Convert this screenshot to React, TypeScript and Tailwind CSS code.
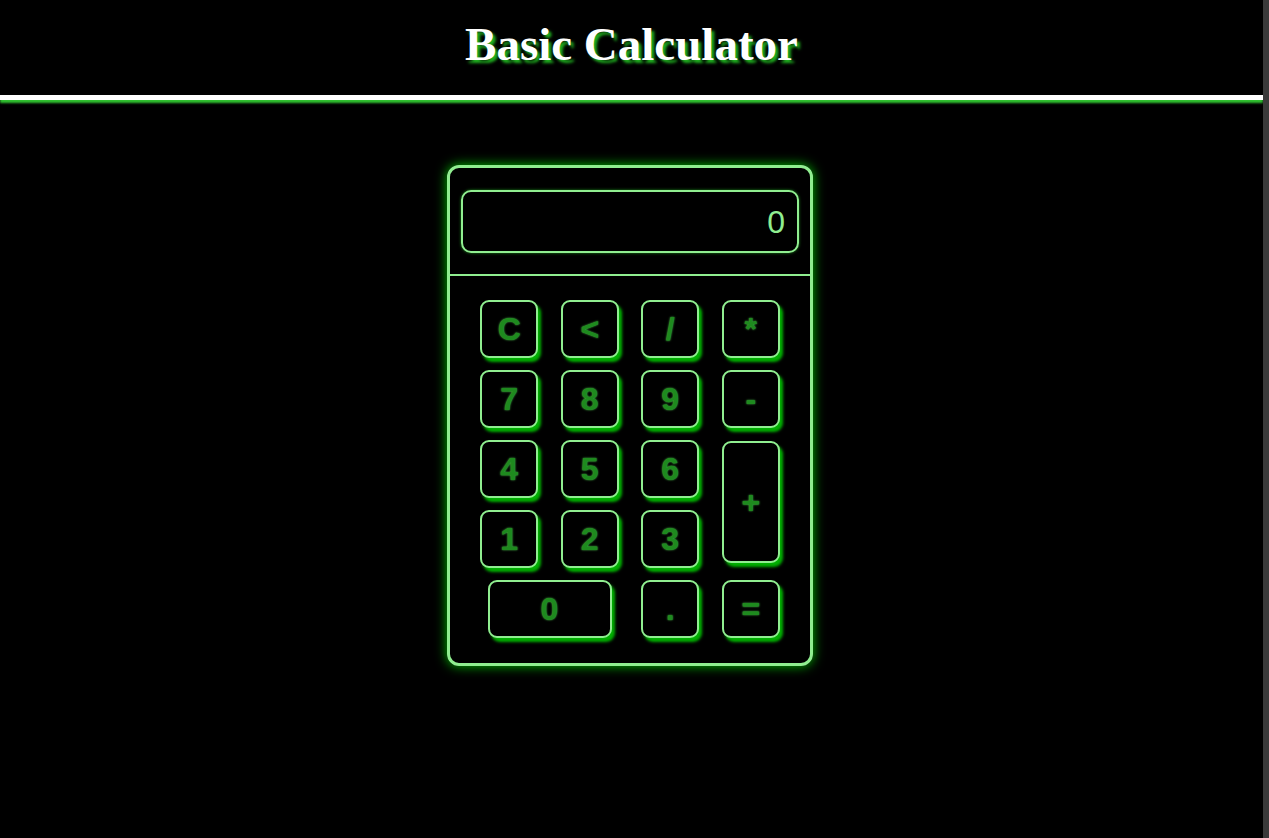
const keys: string[] = ["C", "<", "/", "*", "7", "8", "9", "-", "4", "5", "6", "+", "1", "2", "3", "0", ".", "="];

function cellClass(label: string) {
  if (label === "+") return "row-span-2";
  if (label === "0") return "col-span-2";
  if (label === ".") return "col-start-3";
  return "";
}

function sizeClass(label: string) {
  if (label === "+") return "mb-[4px] h-[122px] w-[58px]";
  if (label === "0") return "h-[58px] w-[124px]";
  return "h-[58px] w-[58px]";
}

export default function App() {
  return (
    <div className="flex min-h-[838px] bg-black">
      <div className="flex-1">
        {/* title bar */}
        <header className="h-[100px] border-b-[5px] border-white pt-[21px] text-center shadow-[0_3px_2px_#2fbf2f]">
          <h1 className="font-['Liberation_Serif',serif] text-[47px] leading-none font-bold text-white [text-shadow:3px_3px_3px_#1fb01f]">
            Basic Calculator
          </h1>
        </header>

        <div className="mt-[65px] flex justify-center pr-[3px]">
          <div className="w-[366px] rounded-[12px] border-[3px] border-[#90ee90] shadow-[0_0_12px_#00c000]">
            <div className="px-[11px] pt-[22px] pb-[21px]">
              <div className="flex h-[63px] items-center justify-end rounded-[10px] border-2 border-[#90ee90] pr-[12px] font-['Liberation_Sans',sans-serif] text-[32px] text-[#90ee90] shadow-[0_0_3px_#1a8a1a]">
                0
              </div>
            </div>
            <div className="h-[2px] bg-[#90ee90]" />

            <div className="grid grid-cols-4 auto-rows-[70px] px-[19px] pt-[18px] pb-[19px]">
              {keys.map((k) => (
                <div key={k} className={`flex items-center justify-center ${cellClass(k)}`}>
                  <button
                    className={`flex items-center justify-center rounded-[9px] border-2 border-[#90ee90] bg-black font-['Liberation_Sans',sans-serif] text-[32px] leading-none font-semibold text-[#1e8a1e] shadow-[3px_4px_3px_#00b000] [text-shadow:0_0_2px_#52d452] ${sizeClass(k)}`}
                  >
                    {k}
                  </button>
                </div>
              ))}
            </div>
          </div>
        </div>
      </div>
      <div className="w-[6px] bg-[#3a3a3a]" />
    </div>
  );
}
